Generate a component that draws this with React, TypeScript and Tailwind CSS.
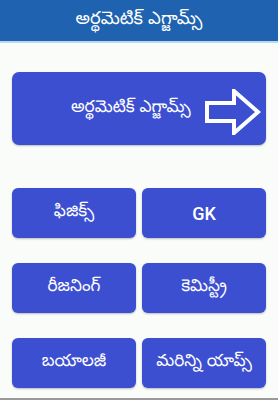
import React from "react";

const font = { fontFamily: '"Noto Sans Telugu", "Noto Sans", Roboto, sans-serif' };

function Btn({ label, latin }: { label: string; latin?: boolean }) {
  return (
    <div className="h-[50px] rounded-[6px] bg-[#3d4fd1] shadow-[0_1px_2px_rgba(0,0,0,0.25)] flex items-center justify-center text-white">
      {latin ? (
        <span className="text-[18px] font-medium" style={{ fontFamily: "Roboto, sans-serif" }}>
          {label}
        </span>
      ) : (
        <span className="text-[17px]">{label}</span>
      )}
    </div>
  );
}

export default function App() {
  return (
    <div className="w-[278px] h-[400px] bg-[#f9fcf8] flex flex-col overflow-hidden" style={font}>
      <div className="h-[41px] bg-[#1e62b0] flex items-center justify-center text-white text-[18px]">
        అర్థమెటిక్ ఎగ్జామ్స్
      </div>
      <div className="h-[2px] bg-[#bcd6ef]" />
      <div className="flex-1 px-[12px] pt-[29px] flex flex-col">
        <div className="relative h-[73px] rounded-[7px] bg-[#3d4fd1] shadow-[0_1px_2px_rgba(0,0,0,0.25)] overflow-hidden">
          <div className="absolute left-[59px] top-0 h-full flex items-center text-white text-[17px] whitespace-nowrap">
            అర్థమెటిక్ ఎగ్జామ్స్
          </div>
          <svg className="absolute left-[193px] top-[17px]" width="56" height="46" viewBox="0 0 56 46">
            <path
              d="M2 14 H29 V2 L53 23 L29 44 V32 H2 Z"
              fill="#3d4fd1"
              stroke="#ffffff"
              strokeWidth="4"
              strokeLinejoin="miter"
            />
          </svg>
        </div>
        <div className="grid grid-cols-2 gap-x-[6px] gap-y-[25px] mt-[43px]">
          <Btn label="ఫిజిక్స్" />
          <Btn label="GK" latin />
          <Btn label="రీజనింగ్" />
          <Btn label="కెమిస్ట్రీ" />
          <Btn label="బయాలజీ" />
          <Btn label="మరిన్ని యాప్స్" />
        </div>
      </div>
      <div className="h-[2px] bg-[#9a9a9a]" />
    </div>
  );
}
